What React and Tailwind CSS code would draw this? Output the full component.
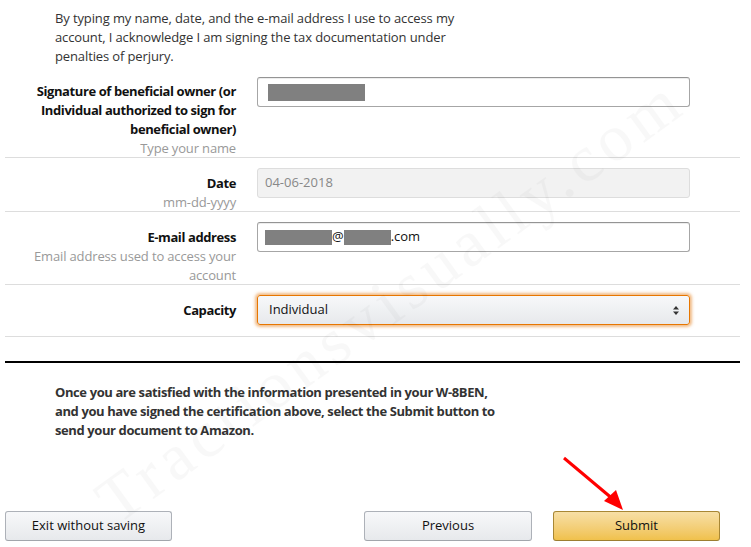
const font = { fontFamily: '"Open Sans", "Noto Sans", Arial, sans-serif' };

function Row({ label, hint, children }) {
  return (
    <div className="grid grid-cols-[231px_433px] gap-x-[21px] border-b border-[#dddddd] pt-[10px]">
      <div className="-mb-[1px] pt-[6px] text-right text-[13px] leading-[19px]">
        <div className="font-bold tracking-[-0.4px] text-[#111]">{label}</div>
        {hint && <div className="tracking-[-0.15px] text-[#999]">{hint}</div>}
      </div>
      <div className="pb-[11px]">{children}</div>
    </div>
  );
}

function Redact({ w }) {
  return <span className="inline-block h-[15px] bg-[#808080] align-[-2px]" style={{ width: w }} />;
}

function Arrow() {
  return (
    <svg className="pointer-events-none absolute left-0 top-0" width="751" height="547">
      <line x1="564" y1="458" x2="614" y2="500" stroke="#ff0000" strokeWidth="3" />
      <polygon points="604,501 616,490 623,510" fill="#ff0000" />
    </svg>
  );
}

function SelectArrows() {
  return (
    <svg width="8" height="11" viewBox="0 0 8 11">
      <polygon points="4,1 7,4.5 1,4.5" fill="#333" />
      <polygon points="1,6.5 7,6.5 4,10" fill="#333" />
    </svg>
  );
}

function Watermark() {
  return (
    <div className="pointer-events-none absolute left-0 top-0 h-[547px] w-[751px] overflow-hidden">
      <div
        className="absolute left-[-40px] top-[250px] w-[860px] origin-center rotate-[-36deg] whitespace-nowrap text-center text-[66px] tracking-[6px] text-[#000] opacity-[0.022]"
        style={{ fontFamily: '"Liberation Serif", serif' }}
      >
        Tractionsvisually.com
      </div>
    </div>
  );
}

export default function App() {
  return (
    <div className="relative h-[547px] w-[751px] overflow-hidden bg-white" style={font}>
      <div className="ml-[5px] w-[735px]">
        <p className="pl-[50px] pt-[9px] text-[13px] leading-[19px] tracking-[-0.12px] text-[#333]">
          By typing my name, date, and the e-mail address I use to access my
          <br />
          account, I acknowledge I am signing the tax documentation under
          <br />
          penalties of perjury.
        </p>

        <Row
          label={
            <>
              Signature of beneficial owner (or
              <br />
              Individual authorized to sign for
              <br />
              beneficial owner)
            </>
          }
          hint="Type your name"
        >
          <div className="mt-[1px] flex h-[30px] items-center rounded-[3px] border border-[#a6a6a6] border-t-[#949494] bg-white pl-[10px] shadow-[inset_0_1px_0_rgba(0,0,0,0.07)]">
            <span className="inline-block h-[17px] w-[97px] bg-[#808080]" />
          </div>
        </Row>

        <Row label="Date" hint="mm-dd-yyyy">
          <div className="flex h-[30px] items-center rounded-[3px] border border-[#dddddd] bg-[#f2f2f2] pl-[7px] text-[13px] text-[#888]">
            04-06-2018
          </div>
        </Row>

        <Row
          label="E-mail address"
          hint={
            <>
              Email address used to access your
              <br />
              account
            </>
          }
        >
          <div className="flex h-[30px] items-center rounded-[3px] border border-[#a6a6a6] border-t-[#949494] bg-white pl-[7px] text-[13px] text-[#111] shadow-[inset_0_1px_0_rgba(0,0,0,0.07)]">
            <Redact w={67} />
            <span>@</span>
            <Redact w={47} />
            <span>.com</span>
          </div>
        </Row>

        <Row label="Capacity">
          <div className="flex h-[30px] items-center justify-between rounded-[3px] border border-[#e77600] bg-gradient-to-b from-[#f7f8fa] to-[#e7e9ec] pl-[11px] pr-[9px] text-[13px] text-[#111] shadow-[0_0_3px_2px_rgba(228,121,17,0.5)]">
            <span>Individual</span>
            <SelectArrows />
          </div>
        </Row>

        <div className="mt-[24px] h-[2px] w-[735px] bg-black" />

        <p className="pl-[50px] pt-[20px] text-[13px] font-bold leading-[19px] tracking-[-0.4px] text-[#333]">
          Once you are satisfied with the information presented in your W-8BEN,
          <br />
          and you have signed the certification above, select the Submit button to
          <br />
          send your document to Amazon.
        </p>
      </div>

      <div className="mt-[71px] flex w-[720px] items-center pl-[5px] text-[13px] text-[#111]">
        <button className="h-[30px] w-[167px] rounded-[3px] border border-[#adb1b8] border-b-[#a2a6ac] bg-gradient-to-b from-[#f7f8fa] to-[#e7e9ec]">
          Exit without saving
        </button>
        <div className="flex-1" />
        <button className="h-[30px] w-[168px] rounded-[3px] border border-[#adb1b8] border-b-[#a2a6ac] bg-gradient-to-b from-[#f7f8fa] to-[#e7e9ec]">
          Previous
        </button>
        <button className="ml-[21px] h-[30px] w-[167px] rounded-[3px] border border-[#a88734] border-b-[#9c7e31] bg-gradient-to-b from-[#f7dfa5] to-[#f0c14b]">
          Submit
        </button>
      </div>

      <Watermark />
      <Arrow />
    </div>
  );
}
